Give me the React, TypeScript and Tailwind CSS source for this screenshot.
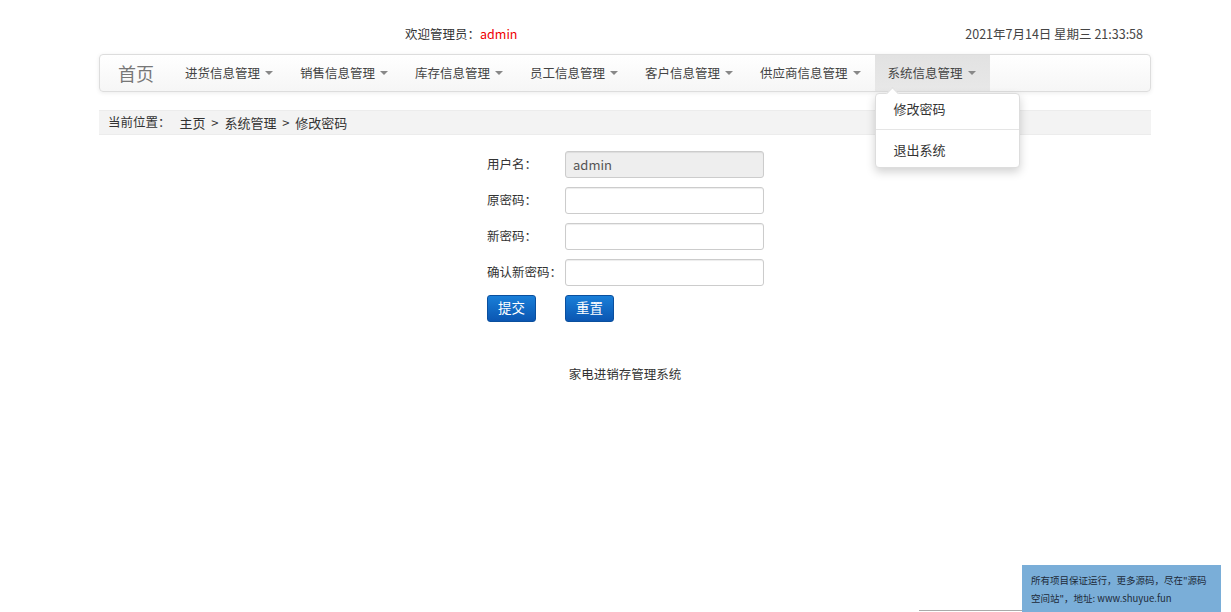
import React from 'react';

const NAV_ITEMS = ['进货信息管理', '销售信息管理', '库存信息管理', '员工信息管理', '客户信息管理', '供应商信息管理', '系统信息管理'];

const Caret = () => (
  <span className="ml-[5px] inline-block w-0 h-0 border-x-[4px] border-x-transparent border-t-[4px] border-t-[#888] align-middle" />
);

const FONT = { fontFamily: '"Microsoft YaHei", "Noto Sans CJK SC", "Liberation Sans", sans-serif' };

function FormRow({ label, value, disabled }: { label: string; value?: string; disabled?: boolean }) {
  return (
    <div className="flex items-center h-[26px] mb-[10px]">
      <label className="w-[78px] text-[12.5px] text-[#333]">{label}</label>
      <input
        readOnly
        value={value ?? ''}
        className={`w-[199px] h-[27px] rounded-[3px] border border-[#ccc] px-[7px] text-[13px] text-[#555] outline-none shadow-[inset_0_1px_1px_rgba(0,0,0,0.075)] ${disabled ? 'bg-[#eee]' : 'bg-white'}`}
      />
    </div>
  );
}

export default function App() {
  return (
    <div className="relative min-h-[612px] bg-white text-[#333]" style={FONT}>
      {/* top line */}
      <div className="ml-[99px] w-[1052px] h-[46px] flex items-end pb-[2px] text-[12.5px]">
        <span className="ml-[306px]">欢迎管理员：<span className="text-[#e00]">admin</span></span>
        <div className="flex-1" />
        <span className="mr-[8px] text-[#444]">2021年7月14日 星期三 21:33:58</span>
      </div>

      {/* navbar */}
      <nav className="relative mt-[8px] ml-[99px] w-[1052px] h-[38px] flex items-stretch rounded-[4px] border border-[#ddd] bg-gradient-to-b from-white to-[#f6f6f6] shadow-[0_1px_4px_rgba(0,0,0,0.08)]">
        <span className="pl-[18px] pr-[18px] flex items-center text-[18px] text-[#777]">首页</span>
        {NAV_ITEMS.map((item, i) => {
          const active = i === NAV_ITEMS.length - 1;
          return (
            <div key={item}
              className={`relative flex items-center pl-[13px] pr-[14px] text-[12.5px] text-[#444] ${active ? 'bg-gradient-to-b from-[#e2e2e2] to-[#e8e8e8]' : ''}`}>
              {item}<Caret />
              {active && (
                <div className="absolute left-0 top-[38px] w-[145px] bg-white rounded-[4px] border border-[#ddd] shadow-[0_4px_10px_rgba(0,0,0,0.18)] z-20">
                  <div className="absolute -top-[5px] left-[12px] w-[9px] h-[9px] bg-white border-l border-t border-[#ddd] rotate-45" />
                  <div className="relative px-[18px] py-[5px] leading-[20px] text-[13px] text-[#333]">修改密码</div>
                  <div className="my-[5px] h-px bg-[#e5e5e5]" />
                  <div className="px-[18px] py-[5px] leading-[20px] text-[13px] text-[#333] mb-[2px]">退出系统</div>
                </div>
              )}
            </div>
          );
        })}
      </nav>

      {/* breadcrumb */}
      <div className="mt-[18px] ml-[99px] w-[1052px] h-[25px] flex items-center px-[9px] bg-[#f3f3f3] border-y border-[#ececec] text-[12.5px] text-[#333] whitespace-pre">
        当前位置：<span className="ml-[9px] text-[13px]">主页  &gt;  系统管理  &gt;  修改密码</span>
      </div>

      {/* form */}
      <div className="mt-[16px] ml-[487px] w-[280px]">
        <FormRow label="用户名：" value="admin" disabled />
        <FormRow label="原密码：" />
        <FormRow label="新密码：" />
        <FormRow label="确认新密码：" />
        <div className="flex">
          <button className="w-[49px] h-[27px] pb-[3px] rounded-[3px] bg-gradient-to-b from-[#1a7fd8] to-[#0b56b2] border border-[#0a4f9e] text-white text-[13.5px]">提交</button>
          <button className="ml-[29px] w-[49px] h-[27px] pb-[3px] rounded-[3px] bg-gradient-to-b from-[#1a7fd8] to-[#0b56b2] border border-[#0a4f9e] text-white text-[13.5px]">重置</button>
        </div>
      </div>

      <div className="mt-[43px] ml-[99px] w-[1052px] text-center text-[12.5px] text-[#333]">家电进销存管理系统</div>

      {/* bottom-right notice */}
      <div className="absolute right-[102px] bottom-[1px] w-[210px] h-px bg-[#aaa]" />
      <div className="absolute right-[10px] bottom-0 w-[199px] h-[47px] bg-[#7aaed8] px-[9px] pt-[6px] text-[9.5px] leading-[18px] text-[#1d2a38]">
        所有项目保证运行，更多源码，尽在"源码空间站"，地址: www.shuyue.fun
      </div>
    </div>
  );
}
